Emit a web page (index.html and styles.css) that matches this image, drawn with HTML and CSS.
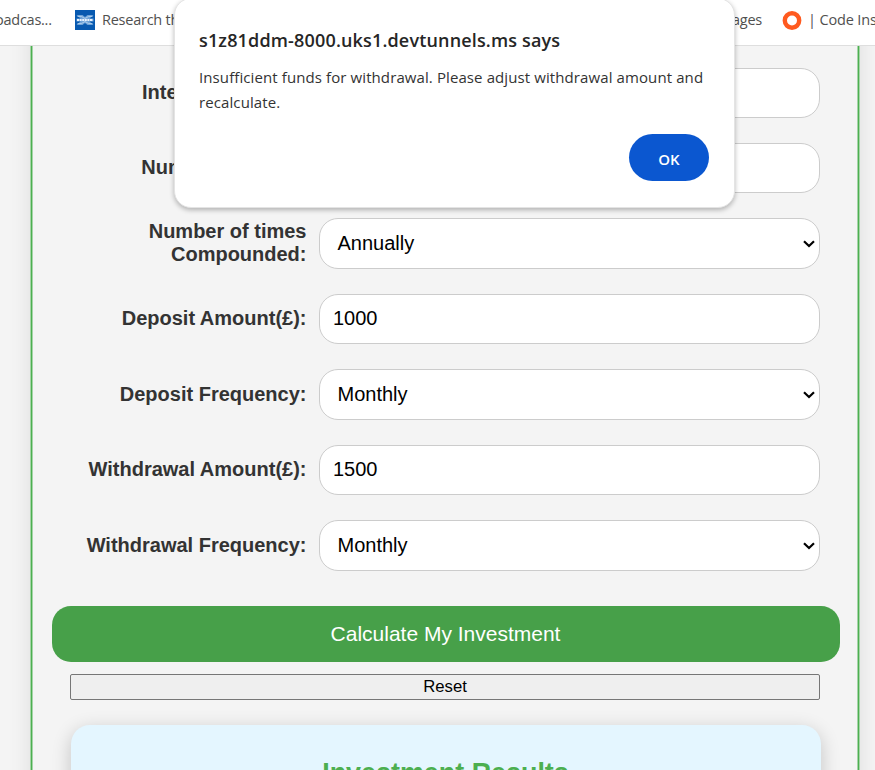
FILE: index.html
```html
<!DOCTYPE html>
<html lang="en">
<head>
<meta charset="utf-8">
<title>Investment Calculator</title>
<link rel="stylesheet" href="styles.css">
</head>
<body>
<header class="bookmarks">
  <span class="bm-text bm-first">oadcas...</span>
  <svg class="bm-halifax" width="20" height="20" viewBox="0 0 20 20">
    <rect width="20" height="20" fill="#0759b0"/>
    <path d="M1.500 5h6l2.500 2 2.500-2h6l-4 3.500h4v3h-4l4 3.500h-6l-2.500-2-2.500 2h-6l4-3.500h-4v-3h4z" fill="#6fa3d8"/>
    <path d="M2.500 6.500h4l3.500 2 3.500-2h4M2.500 13.500h4l3.500-2 3.500 2h4" fill="none" stroke="#b9d5f0" stroke-width=".8"/>
    <path d="M2 10h16" stroke="#e8f3ff" stroke-width="2" stroke-dasharray="2 .6"/>
  </svg>
  <span class="bm-text bm-research">Research th</span>
  <span class="bm-text bm-pages">ages</span>
  <svg class="bm-ring" width="20" height="20" viewBox="0 0 20 20"><circle cx="10" cy="10.500" r="7.200" fill="none" stroke="#ff5a1f" stroke-width="4.400"/></svg>
  <span class="bm-text bm-code">| Code Insti</span>
</header>
<main class="page">
  <section class="calculator">
    <form class="fields">
      <label class="label">Interest Rate (%):</label><div class="control"></div>
      <label class="label">Number of Years:</label><div class="control"></div>
      <label class="label">Number of times Compounded:</label><div class="control select">Annually<svg class="chevron" width="12" height="8" viewBox="0 0 12 8"><path d="M1 1.300 6 6.100 11 1.300"/></svg></div>
      <label class="label">Deposit Amount(£):</label><div class="control">1000</div>
      <label class="label">Deposit Frequency:</label><div class="control select">Monthly<svg class="chevron" width="12" height="8" viewBox="0 0 12 8"><path d="M1 1.300 6 6.100 11 1.300"/></svg></div>
      <label class="label">Withdrawal Amount(£):</label><div class="control">1500</div>
      <label class="label">Withdrawal Frequency:</label><div class="control select">Monthly<svg class="chevron" width="12" height="8" viewBox="0 0 12 8"><path d="M1 1.300 6 6.100 11 1.300"/></svg></div>
    </form>
    <button class="calculate" type="button">Calculate My Investment</button>
    <button class="reset" type="button">Reset</button>
    <section class="results"><h2 class="results-title">Investment Results</h2></section>
  </section>
</main>
<div class="dialog" role="alertdialog">
  <h1 class="dialog-title">s1z81ddm-8000.uks1.devtunnels.ms says</h1>
  <p class="dialog-text">Insufficient funds for withdrawal. Please adjust withdrawal amount and<br>recalculate.</p>
  <button class="ok" type="button">OK</button>
</div>
</body>
</html>
```
FILE: styles.css
```css
* { box-sizing: border-box; }
body {
  margin: 0;
  height: 770px;
  overflow: hidden;
  position: relative;
  background: #f4f4f4;
  font-family: "Liberation Sans", Arial, sans-serif;
}
.bookmarks {
  height: 46px;
  display: flex;
  align-items: center;
  padding-bottom: 5px;
  background: #fff;
  border-bottom: 1px solid #dedede;
  overflow: hidden;
}
.bookmarks > * { flex: none; }
.bm-text {
  font: 14.5px/20px "Open Sans", sans-serif;
  color: #50504f;
  white-space: nowrap;
  letter-spacing: -0.25px;
}
.bm-first { width: 79px; margin-left: -5px; }
.bm-research { width: 80px; margin-left: 7px; overflow: hidden; }
.bm-halifax { width: 20px; margin-left: 1px; }
.bm-pages { margin-left: 550px; width: 48px; }
.bm-ring { margin-left: 2px; }
.bm-code { margin-left: 6px; letter-spacing: -0.15px; }
.page {
  height: 724px;
  padding: 0 16px 0 31px;
  overflow: hidden;
}
.calculator {
  width: 828px;
  height: 800px;
  margin-top: -30px;
  padding: 52px 19px 0 19.5px;
  display: flex;
  flex-direction: column;
  border-left: 1px solid #4caf50;
  border-right: 1px solid #4caf50;
  box-shadow: 0 0 0 1px #a5d4a7, inset 0 0 0 1px #a5d4a7, 0 0 20px rgba(0,0,0,.1);
}
.fields {
  display: grid;
  grid-template-columns: 236px 501px;
  grid-template-rows: 50px 50px 51px 50px 51px 50px 51px;
  column-gap: 12.5px;
  row-gap: 25px;
  margin-left: 19px;
}
.label {
  align-self: center;
  text-align: right;
  font-size: 20px;
  line-height: 23px;
  font-weight: bold;
  color: #333;
  padding-bottom: 1px;
}
.control {
  display: flex;
  align-items: center;
  padding: 0 13px 2px;
  border: 1px solid #ccc;
  border-radius: 19px;
  background: #fff;
  color: #000;
  font-size: 20px;
}
.select {
  padding: 0 4px 0 17.5px;
  justify-content: space-between;
}
.chevron {
  margin-top: 1px;
  fill: none;
  stroke: #000;
  stroke-width: 2.200;
}
.calculate {
  flex: none;
  width: 788px;
  height: 56px;
  margin-top: 35px;
  padding: 0 0 1px;
  border: 0;
  border-radius: 19px;
  background: #47a049;
  color: #fff;
  font: 21px "Liberation Sans", Arial, sans-serif;
}
.reset {
  flex: none;
  width: 750px;
  height: 26px;
  margin: 12px 0 0 18.5px;
  padding: 0;
  border: 1px solid #767676;
  border-radius: 2px;
  background: #efefef;
  color: #000;
  font: 16.700px "Liberation Sans", Arial, sans-serif;
}
.results {
  flex: none;
  width: 750px;
  height: 100px;
  margin: 25px 0 0 19px;
  padding-top: 33px;
  border-radius: 19px;
  background: #e4f6ff;
  box-shadow: 0 5px 19px rgba(0,0,0,.2);
}
.results-title {
  margin: 0;
  text-align: center;
  color: #4caf50;
  font-size: 26.900px;
  line-height: 30px;
}
.dialog {
  position: absolute;
  left: 174px;
  top: -2px;
  width: 561px;
  height: 210px;
  padding: 29px 25px 0 24px;
  border: 1px solid #e4e4e4;
  border-radius: 17px;
  background: #fff;
  box-shadow: 0 2px 5px rgba(0,0,0,.28);
  font-family: "Open Sans", sans-serif;
  display: flex;
  flex-direction: column;
}
.dialog-title {
  margin: 0 0 12px;
  font-size: 18px;
  line-height: 25px;
  font-weight: 600;
  letter-spacing: .16px;
  color: #262626;
  white-space: nowrap;
}
.dialog-text {
  margin: 0;
  font-size: 15px;
  line-height: 25px;
  letter-spacing: .1px;
  color: #333;
  white-space: nowrap;
}
.ok {
  flex: none;
  align-self: flex-end;
  width: 80px;
  height: 47px;
  margin-top: 19px;
  padding: 2px 0 0;
  border: 0;
  border-radius: 24px;
  background: #0b57d0;
  color: #fff;
  font: 600 15px "Open Sans", sans-serif;
}
```
